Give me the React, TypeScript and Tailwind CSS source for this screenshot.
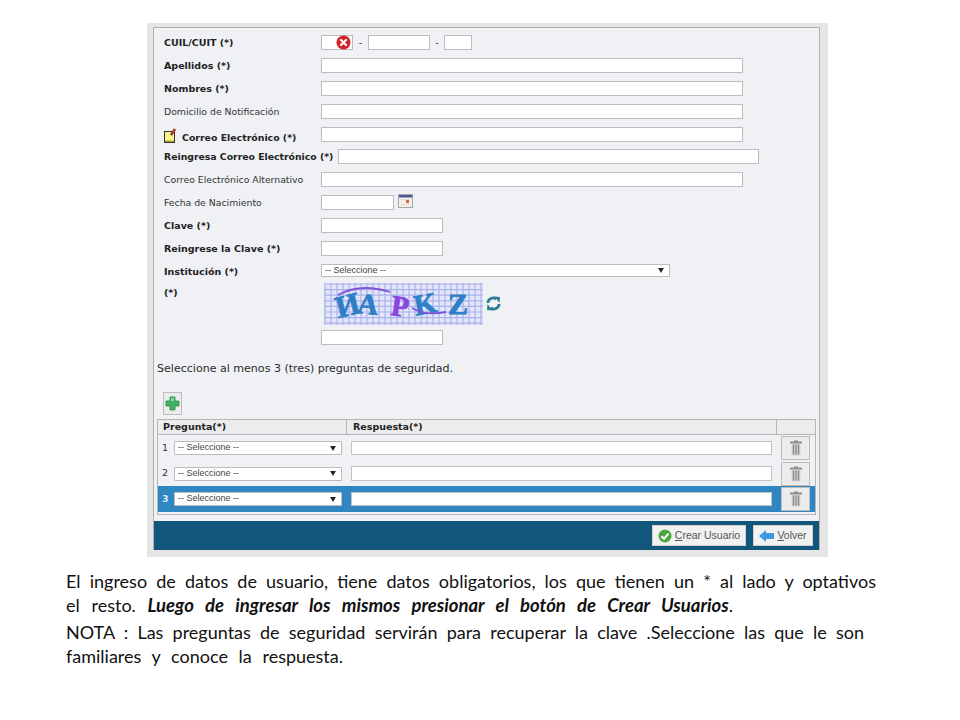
const labelFont = "font-['DejaVu_Sans',sans-serif]";

function Field({ className = "" }: { className?: string }) {
  return <div className={`h-[15px] shrink-0 border border-[#bcbcbc] bg-white ${className}`} />;
}

function Row({
  label,
  bold = false,
  children,
}: {
  label: string;
  bold?: boolean;
  children: React.ReactNode;
}) {
  return (
    <div className="flex h-[22.9px] items-start">
      <div
        className={`w-[157px] shrink-0 leading-[15px] ${
          bold ? "text-[9.5px] font-bold text-[#222]" : "text-[9.3px] text-[#333]"
        }`}
      >
        {label}
      </div>
      {children}
    </div>
  );
}

function FakeSelect({ className = "", compact = false }: { className?: string; compact?: boolean }) {
  return (
    <div
      className={`flex items-center justify-between border border-[#bcbcbc] bg-white pl-[3px] pr-[5px] font-['Liberation_Sans',sans-serif] text-[9px] text-[#444] ${className} ${
        compact ? "h-[14px]" : "h-[13px]"
      }`}
    >
      <span>-- Seleccione --</span>
      <svg width="6" height="5" viewBox="0 0 7 6">
        <path d="M0 0h7L3.5 6z" fill="#222" />
      </svg>
    </div>
  );
}

function ErrorIcon() {
  return (
    <svg width="15" height="15" viewBox="0 0 15 15" className="absolute left-[15px] top-0">
      <circle cx="7.5" cy="7.5" r="7" fill="#d2232a" />
      <path d="M5 5l5 5M10 5l-5 5" stroke="#fff" strokeWidth="2.2" strokeLinecap="round" />
    </svg>
  );
}

function NoteIcon() {
  return (
    <svg width="14" height="16" viewBox="0 0 14 16">
      <rect x="0.5" y="4.5" width="10" height="11" fill="#fbf38a" stroke="#333" />
      <path d="M1 13.5h9V15H1z" fill="#a8a335" />
      <path d="M7 8l4-6" stroke="#b43a2c" strokeWidth="2.6" />
      <path d="M7 8l1.500-1" stroke="#333" strokeWidth="1" />
    </svg>
  );
}

function CalendarIcon() {
  return (
    <svg width="15" height="14" viewBox="0 0 15 14">
      <rect x="0.5" y="0.5" width="14" height="13" fill="#f6f0e8" stroke="#a5a5ae" />
      <rect x="1" y="1" width="13" height="2.5" fill="#4a5794" />
      <rect x="8" y="6" width="3" height="3" fill="#d0694e" />
      <path d="M3 5.5h9M3 10.5h9" stroke="#e2d9ca" />
    </svg>
  );
}

function Captcha() {
  const cols = Array.from({ length: 27 }, (_, i) => i * 6 + 1);
  const rows = Array.from({ length: 8 }, (_, i) => i * 5.6 + 1);
  return (
    <svg width="159" height="42" viewBox="0 0 159 42" className="block">
      <rect width="159" height="42" fill="#e3e6f8" />
      {cols.map((x) => (
        <line key={x} x1={x} y1="0" x2={x} y2="42" stroke="#aab2ec" strokeWidth="1.2" />
      ))}
      {rows.map((y) => (
        <line key={y} x1="0" y1={y} x2="159" y2={y} stroke="#aab2ec" strokeWidth="1.2" />
      ))}
      <g fontFamily="'Liberation Serif', serif" fontWeight="700" strokeWidth="0.8">
        <text x="12" y="33" fontSize="31" fill="#2f7fc8" stroke="#2f7fc8" transform="rotate(-14 22 25)">
          И
        </text>
        <text x="33" y="31" fontSize="29" fill="#2f7fc8" stroke="#2f7fc8" transform="rotate(6 45 25)">
          A
        </text>
        <text x="67" y="33" fontSize="29" fill="#8a45e0" stroke="#8a45e0" transform="rotate(8 75 25)">
          P
        </text>
        <text x="90" y="31" fontSize="29" fill="#2f7fc8" stroke="#2f7fc8" transform="rotate(-10 100 22)">
          K
        </text>
        <text x="124" y="31" fontSize="30" fill="#2f7fc8" stroke="#2f7fc8">
          Z
        </text>
      </g>
      <path d="M14 12C32 2 50 4 66 9M88 25c12 7 24 6 34 4" fill="none" stroke="#7f52dc" strokeWidth="1.8" />
    </svg>
  );
}

function RefreshIcon() {
  return (
    <svg width="15" height="15" viewBox="0 0 15 15">
      <path d="M1.8 7A5.5 5.5 0 0 1 10.5 3" fill="none" stroke="#2d7f96" strokeWidth="2.8" />
      <path d="M8.5 .5l5.5 .5-.5 6z" fill="#2d7f96" />
      <path d="M13.2 8A5.5 5.5 0 0 1 4.5 12" fill="none" stroke="#2d7f96" strokeWidth="2.8" />
      <path d="M6.5 14.5L1 14l.5-6z" fill="#2d7f96" />
    </svg>
  );
}

function PlusIcon() {
  return (
    <svg width="15" height="15" viewBox="0 0 15 15">
      <path d="M5 1h5v4h4v5h-4v4H5v-4H1V5h4z" fill="#3fb463" stroke="#2a8a4a" strokeWidth="0.8" />
      <path d="M6 2h3v3H6z" fill="#85dc9d" />
    </svg>
  );
}

function TrashIcon() {
  return (
    <svg width="14" height="16" viewBox="0 0 14 16">
      <path d="M1 2.5h12M5 1.5h4" stroke="#8d8d8d" strokeWidth="1.8" />
      <path d="M2.5 4h9v11.5h-9z" fill="#d2d2d2" />
      <path d="M4.500 4.500v10M7 4.500v10M9.500 4.500v10" stroke="#8a8a8a" strokeWidth="1.3" />
    </svg>
  );
}

function CheckIcon() {
  return (
    <svg width="14" height="14" viewBox="0 0 14 14" className="shrink-0">
      <circle cx="7" cy="7" r="6.5" fill="#4aa83c" />
      <path d="M3.500 7.200l2.500 2.500 4.500-5" fill="none" stroke="#fff" strokeWidth="2" />
    </svg>
  );
}

function BackIcon() {
  return (
    <svg width="15" height="12" viewBox="0 0 15 12" className="shrink-0">
      <path d="M0 6l7-6v3h8v6H7v3z" fill="#3f97de" />
    </svg>
  );
}

function QuestionRow({ n, active = false }: { n: number; active?: boolean }) {
  return (
    <div className={`flex h-[25.5px] items-center ${active ? "bg-[#2f86c1]" : ""}`}>
      <div
        className={`w-[16px] shrink-0 pl-[4px] text-[9.5px] ${
          active ? "font-bold text-[#cfe8f7]" : "text-[#333]"
        }`}
      >
        {n}
      </div>
      <FakeSelect className="w-[168px] shrink-0 rounded-[1px]" compact />
      <div className="ml-[9px] h-[14.5px] w-[421px] shrink-0 border border-[#c2c2c2] bg-white" />
      <div className="ml-[9px] flex h-[24px] w-[29px] shrink-0 items-center justify-center border border-[#bdbdbd] bg-[#ececec]">
        <TrashIcon />
      </div>
    </div>
  );
}

export default function App() {
  return (
    <div className="min-h-[720px] w-[960px] bg-white pt-[23px]">
      <div className="ml-[147px] w-[681px] bg-[#e5e5e5] px-[6px] pb-[7px] pt-[4px]">
        <div className={`h-[523px] w-[667px] border border-[#b0b0b0] bg-[#eff1f4] ${labelFont}`}>
          <div className="pl-[10px] pt-[7px]">
            <Row label="CUIL/CUIT (*)" bold>
              <div className="relative">
                <Field className="w-[32px]" />
                <ErrorIcon />
              </div>
              <span className="w-[15px] text-center text-[9.5px] leading-[15px] text-[#333]">-</span>
              <Field className="w-[62px]" />
              <span className="w-[14px] text-center text-[9.5px] leading-[15px] text-[#333]">-</span>
              <Field className="w-[28px]" />
            </Row>
            <Row label="Apellidos (*)" bold>
              <Field className="w-[422px]" />
            </Row>
            <Row label="Nombres (*)" bold>
              <Field className="w-[422px]" />
            </Row>
            <Row label="Domicilio de Notificación">
              <Field className="w-[422px]" />
            </Row>
            <div className="flex h-[22.9px] items-start">
              <div className="flex w-[157px] shrink-0 items-end gap-[4px] text-[9.4px] font-bold leading-[15px] text-[#222]">
                <NoteIcon />
                <span className="-mb-[2px]">Correo Electrónico (*)</span>
              </div>
              <Field className="w-[422px]" />
            </div>
            <div className="flex h-[22.9px] items-start">
              <div className="w-[174px] shrink-0 text-[9.3px] font-bold leading-[15px] text-[#222]">
                Reingresa Correo Electrónico (*)
              </div>
              <Field className="w-[421px]" />
            </div>
            <Row label="Correo Electrónico Alternativo">
              <Field className="w-[422px]" />
            </Row>
            <Row label="Fecha de Nacimiento">
              <Field className="w-[73px]" />
              <span className="ml-[4px] -mt-[1px]">
                <CalendarIcon />
              </span>
            </Row>
            <Row label="Clave (*)" bold>
              <Field className="w-[122px]" />
            </Row>
            <Row label="Reingrese la Clave (*)" bold>
              <Field className="w-[122px]" />
            </Row>
            <Row label="Institución (*)" bold>
              <FakeSelect className="w-[349px]" />
            </Row>
            <div className="-mt-[4px] flex items-start">
              <div className="w-[160px] shrink-0 pt-[3px] text-[9.5px] font-bold leading-[13px] text-[#222]">
                (*)
              </div>
              <Captcha />
              <span className="ml-[3px] mt-[13px]">
                <RefreshIcon />
              </span>
            </div>
            <div className="mt-[5px] pl-[157px]">
              <Field className="w-[122px]" />
            </div>
          </div>
          <div className="mt-[17px] pl-[3px] text-[11.05px] leading-[14px] text-[#2b2b2b]">
            Seleccione al menos 3 (tres) preguntas de seguridad.
          </div>
          <div className="ml-[9px] mt-[16px] flex h-[23px] w-[19px] items-center justify-center border border-[#bdbdbd] bg-[#ececec]">
            <PlusIcon />
          </div>
          <div className="ml-[3px] mt-[4px] w-[659px] border border-[#b5b5b5] pb-[2px]">
            <div className="flex h-[15.5px] border-b border-[#b5b5b5] bg-[#ececec] text-[9.5px] font-bold leading-[14px] text-[#222]">
              <div className="w-[189px] shrink-0 border-r border-[#b5b5b5] pl-[5px]">Pregunta(*)</div>
              <div className="w-[430px] shrink-0 border-r border-[#b5b5b5] pl-[6px]">Respuesta(*)</div>
            </div>
            <QuestionRow n={1} />
            <QuestionRow n={2} />
            <QuestionRow n={3} active />
          </div>
          <div className="mt-[6.5px] flex h-[29px] items-center justify-end gap-[7px] bg-[#12567c] pr-[6px]">
            <button className="flex h-[21px] w-[94px] items-center justify-center gap-[3px] border border-[#cfcfcf] bg-[#f1f1f1] font-['Liberation_Sans',sans-serif] text-[10.5px] text-[#555]">
              <CheckIcon />
              <span>
                <span className="underline">C</span>rear Usuario
              </span>
            </button>
            <button className="flex h-[21px] w-[60px] items-center justify-center gap-[3px] border border-[#cfcfcf] bg-[#f1f1f1] font-['Liberation_Sans',sans-serif] text-[10.5px] text-[#555]">
              <BackIcon />
              <span>
                <span className="underline">V</span>olver
              </span>
            </button>
          </div>
        </div>
      </div>
      <div className="ml-[66px] mt-[12px] font-['Lato',sans-serif] text-[18px] leading-[25px] text-[#111]">
        <div className="h-[24px] w-[810px] text-justify [text-align-last:justify]">
          El ingreso de datos de usuario, tiene datos obligatorios, los que tienen un * al lado y optativos
        </div>
        <div className="h-[27px] w-[667px] text-justify [text-align-last:justify]">
          el resto. <span className="text-[18.5px] font-bold italic">Luego de ingresar los mismos presionar el botón de Crear Usuarios</span>.
        </div>
        <div className="h-[24px] w-[798px] text-justify [text-align-last:justify]">
          NOTA : Las preguntas de seguridad servirán para recuperar la clave .Seleccione las que le son
        </div>
        <div className="w-[277px] text-justify [text-align-last:justify]">familiares y conoce la respuesta.</div>
      </div>
    </div>
  );
}
